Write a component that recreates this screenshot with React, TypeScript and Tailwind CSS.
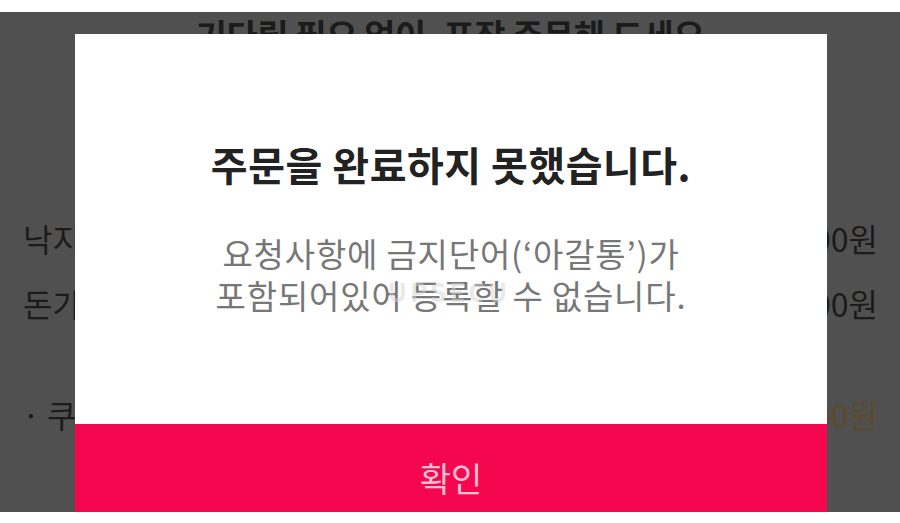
import React from "react";

const font = { fontFamily: '"Noto Sans CJK KR", "Noto Sans", sans-serif' };

export default function App() {
  return (
    <div className="w-[900px] h-[523px] bg-white flex flex-col overflow-hidden" style={font}>
      <div className="h-[12px] bg-white shrink-0" />
      <div className="relative h-[500px] shrink-0 bg-[#505050] text-[#1b1b1b] overflow-hidden">
        <div className="flex flex-col">
          <div className="pt-[3px] text-center text-[34px] font-bold leading-[40px] tracking-[-0.5px]">
            기다릴 필요 없이, 포장 주문해 드세요
          </div>
          <div className="mt-[163px] flex justify-between pl-[23px] pr-[22px] text-[32px] leading-[40px]">
            <span>낙지볶음 1인분</span>
            <span>12,000원</span>
          </div>
          <div className="mt-[25px] flex justify-between pl-[23px] pr-[22px] text-[32px] leading-[40px]">
            <span>돈가스 1인분</span>
            <span>9,000원</span>
          </div>
          <div className="mt-[71px] flex justify-between pl-[22px] pr-[22px] text-[32px] leading-[40px]">
            <span>· 쿠폰 할인</span>
            <span className="text-[#5b4a2c]">-1,000원</span>
          </div>
        </div>

        <div className="absolute left-[75px] top-[22px] w-[752px] h-[478px] bg-white flex flex-col">
          <div className="flex-1 flex flex-col items-center">
            <div className="mt-[105px] text-[40px] font-bold leading-[50px] text-[#222] tracking-[0.5px]">
              주문을 완료하지 못했습니다.
            </div>
            <div className="relative mt-[43px] text-center text-[33px] leading-[42px] text-[#777] tracking-[0.8px]">
              <div>요청사항에 금지단어(‘아갈통’)가</div>
              <div>포함되어있어 등록할 수 없습니다.</div>
              <div className="absolute left-[172px] top-[44px] text-[26px] font-bold leading-[30px] text-[#d4d4d4] opacity-50 tracking-[3px]">
                UPSECU
              </div>
            </div>
          </div>
          <div className="h-[88px] shrink-0 bg-[#f5074f] flex items-center justify-center pt-[20px] text-[34px] leading-[40px] text-[#fbc0d2]">
            확인
          </div>
        </div>
      </div>
      <div className="flex-1 bg-white" />
    </div>
  );
}
